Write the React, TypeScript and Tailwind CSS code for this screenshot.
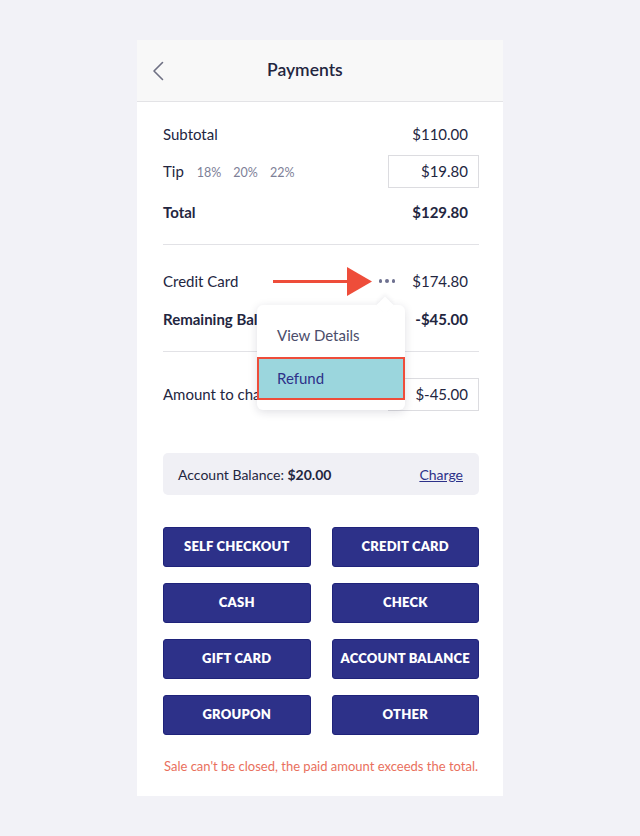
const buttons = [
  "SELF CHECKOUT",
  "CREDIT CARD",
  "CASH",
  "CHECK",
  "GIFT CARD",
  "ACCOUNT BALANCE",
  "GROUPON",
  "OTHER",
];

export default function App() {
  return (
    <div className="min-h-[836px] bg-[#f2f2f7] pt-[40px] font-['Lato','Noto_Sans',sans-serif] text-[#23263f]">
      <div className="mx-auto w-[366px] bg-white pb-[21px]">
        {/* header */}
        <div className="flex h-[62px] items-center border-b border-[#e3e3e6] bg-[#f8f8f8] pl-[15px]">
          <svg width="12" height="20" viewBox="0 0 12 20" fill="none">
            <path d="M10.5 1.5L2 10l8.5 8.5" stroke="#6e7083" strokeWidth="1.6" strokeLinecap="round" strokeLinejoin="round" />
          </svg>
          <h1 className="ml-[103px] text-[17.5px] font-semibold text-[#23263f]">Payments</h1>
        </div>

        <div className="pl-[26px] pr-[24px] pt-[16px] text-[15px]">
          <div className="flex h-[32px] items-center justify-between">
            <span>Subtotal</span>
            <span className="pr-[11px]">$110.00</span>
          </div>
          <div className="mt-[5px] flex h-[33px] items-center justify-between">
            <div className="flex items-baseline">
              <span>Tip</span>
              <span className="ml-[13px] text-[12.5px] text-[#7d8097]">18%</span>
              <span className="ml-[12px] text-[12.5px] text-[#7d8097]">20%</span>
              <span className="ml-[12px] text-[12.5px] text-[#7d8097]">22%</span>
            </div>
            <div className="flex h-[33px] w-[91px] items-center justify-end border border-[#dcdce0] pr-[10px]">$19.80</div>
          </div>
          <div className="mt-[8px] flex h-[32px] items-center justify-between font-bold">
            <span>Total</span>
            <span className="pr-[11px]">$129.80</span>
          </div>

          <div className="mt-[16px] border-t border-[#e2e2e6]" />

          <div className="relative mt-[20px] flex h-[32px] items-center justify-between">
            <span>Credit Card</span>
            <div className="flex items-center">
              <svg width="100" height="32" viewBox="0 0 100 32" className="mr-[6px]">
                <line x1="0" y1="16.5" x2="76" y2="16.5" stroke="#ee4d3a" strokeWidth="3" />
                <polygon points="74,2 99,16.5 74,31" fill="#ee4d3a" />
              </svg>
              <div className="mr-[17px] flex gap-[3px]">
                <span className="h-[3.5px] w-[3.5px] rounded-full bg-[#6e7190]" />
                <span className="h-[3.5px] w-[3.5px] rounded-full bg-[#6e7190]" />
                <span className="h-[3.5px] w-[3.5px] rounded-full bg-[#6e7190]" />
              </div>
              <span className="pr-[11px]">$174.80</span>
            </div>

            {/* dropdown menu */}
            <div className="absolute left-[94px] top-[40px] z-10 w-[148px] rounded-[6px] bg-white pb-[10px] pt-[8px] shadow-[0_2px_10px_rgba(30,30,60,0.14)]">
              <div className="absolute -top-[6px] left-[122px] h-[12px] w-[12px] rotate-45 bg-white shadow-[-2px_-2px_4px_rgba(30,30,60,0.06)]" />
              <div className="relative flex h-[44px] items-center pl-[20px] text-[#4b4d6b]">View Details</div>
              <div className="relative flex h-[43px] items-center border-2 border-[#ee4d3a] bg-[#9bd6dd] pl-[18px] text-[#2d3189]">Refund</div>
            </div>
          </div>
          <div className="mt-[6px] flex h-[32px] items-center justify-between font-bold">
            <span>Remaining Balance</span>
            <span className="pr-[11px]">-$45.00</span>
          </div>

          <div className="mt-[16px] border-t border-[#e2e2e6]" />

          <div className="mt-[26px] flex h-[33px] items-center justify-between">
            <span>Amount to charge</span>
            <div className="flex h-[33px] w-[91px] items-center justify-end border border-[#dcdce0] pr-[10px]">$-45.00</div>
          </div>

          <div className="mt-[42px] flex h-[42px] items-center justify-between rounded-[5px] bg-[#f0f0f5] pl-[15px] pr-[16px] text-[14px]">
            <span>
              Account Balance: <span className="font-bold">$20.00</span>
            </span>
            <span className="text-[#2d3189] underline">Charge</span>
          </div>

          <div className="mt-[32px] grid grid-cols-2 gap-x-[21px] gap-y-[16px]">
            {buttons.map((b) => (
              <div
                key={b}
                className="flex h-[40px] items-center justify-center rounded-[3px] border border-[#1f237a] bg-[#2d3189] text-[13px] font-extrabold tracking-[0.2px] text-white"
              >
                {b}
              </div>
            ))}
          </div>

          <p className="mt-[22px] text-center text-[13px] leading-[18px] text-[#e9705d]">
            Sale can't be closed, the paid amount exceeds the total.
          </p>
        </div>
      </div>
    </div>
  );
}
